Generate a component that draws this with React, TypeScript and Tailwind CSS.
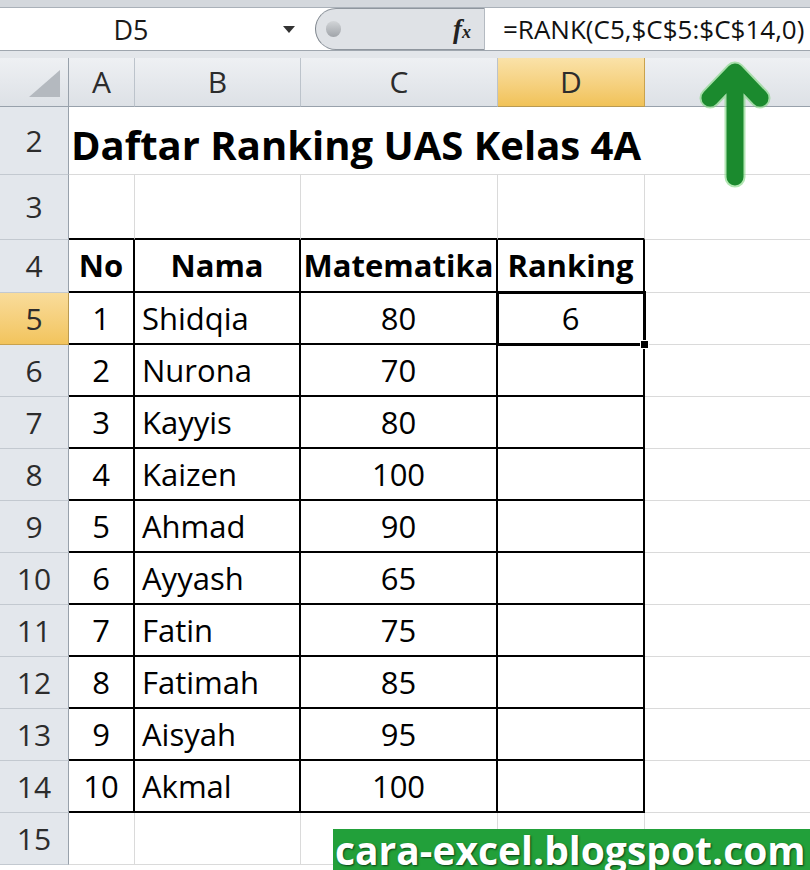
import React from 'react';

const students: [number, string, number][] = [
  [1, 'Shidqia', 80],
  [2, 'Nurona', 70],
  [3, 'Kayyis', 80],
  [4, 'Kaizen', 100],
  [5, 'Ahmad', 90],
  [6, 'Ayyash', 65],
  [7, 'Fatin', 75],
  [8, 'Fatimah', 85],
  [9, 'Aisyah', 95],
  [10, 'Akmal', 100],
];

function FormulaBar() {
  return (
    <div className="h-[58px] flex flex-col">
      <div className="h-[8px] bg-[#d4d8dd] border-b border-[#aab1b9]" />
      <div className="h-[42px] flex bg-white">
        {/* Name box */}
        <div className="w-[315px] flex items-center">
          <span className="w-[262px] text-center text-[27px] leading-none text-[#1a1a1a]">D5</span>
          <svg width="14" height="9" viewBox="0 0 14 9" className="ml-[20px]">
            <path d="M1 1 H13 L7 8 Z" fill="#333" />
          </svg>
        </div>
        {/* Expand pill + fx */}
        <div className="w-[169px] flex items-center bg-[#dfe2e6] rounded-l-[22px] border border-r-0 border-[#8f969e] border-l-[#7d848c]">
          <div className="ml-[10px] w-[15px] h-[16px] rounded-full bg-linear-to-b from-[#d2d5d8] to-[#a0a4a9]" />
          <span className="ml-auto mr-[13px] font-['Liberation_Serif',serif] italic font-bold text-[27px] leading-none text-[#222]">
            f<span className="text-[18px]">x</span>
          </span>
        </div>
        {/* Formula */}
        <div className="flex-1 flex items-center pl-[18px] border-l border-[#b4bac1] text-[26px] leading-none text-[#111]">
          =RANK(C5,$C$5:$C$14,0)
        </div>
      </div>
      <div className="h-[8px] bg-[#e3e6ea] border-t border-[#9fa6ae]" />
    </div>
  );
}

function RowHead({ n, active }: { n: number; active?: boolean }) {
  return (
    <div
      className={`flex items-center justify-center text-[30px] leading-none text-[#2c2c2c] border-r border-b ${
        active
          ? 'bg-linear-to-b from-[#f9dc9a] to-[#f2c45c] border-r-[#b99a52] border-b-[#c9a24d]'
          : 'bg-[#e3e7ec] border-r-[#98a1ab] border-b-[#c3c9d0]'
      }`}
    >
      {n}
    </div>
  );
}

function ColHead({ label, active }: { label: string; active?: boolean }) {
  return (
    <div
      className={`flex items-center justify-center text-[30px] leading-none text-[#2c2c2c] border-r border-b ${
        active
          ? 'bg-linear-to-b from-[#fae2a8] to-[#f1c257] border-r-[#c9a24d] border-b-[#b99a52]'
          : 'bg-linear-to-b from-[#eef0f3] to-[#dde1e6] border-r-[#bcc3cb] border-b-[#98a1ab]'
      }`}
    >
      {label}
    </div>
  );
}

export default function App() {
  return (
    <div className="relative w-[810px] h-[870px] overflow-hidden bg-white font-['Open_Sans',sans-serif] text-black">
      <FormulaBar />

      <div className="grid grid-cols-[69px_66px_166px_197px_147px_1fr] grid-rows-[49px_68px_65px_53px_repeat(11,52px)]">
        {/* Column headers */}
        <div className="relative bg-linear-to-b from-[#eef0f3] to-[#dde1e6] border-r border-b border-r-[#98a1ab] border-b-[#98a1ab]">
          <svg className="absolute right-[8px] bottom-[9px]" width="31" height="27" viewBox="0 0 31 27">
            <path d="M31 0 V27 H0 Z" fill="#b4b9bf" />
          </svg>
        </div>
        <ColHead label="A" />
        <ColHead label="B" />
        <ColHead label="C" />
        <ColHead label="D" active />
        <div className="bg-linear-to-b from-[#eef0f3] to-[#dde1e6] border-b border-[#98a1ab]" />

        {/* Row 2 - title */}
        <RowHead n={2} />
        <div className="relative z-10 flex items-center pt-[8px] pl-[2px] border-b border-[#dadada]">
          <span className="whitespace-nowrap font-bold text-[40px] leading-none">Daftar Ranking UAS Kelas 4A</span>
        </div>
        <div className="border-b border-[#dadada]" />
        <div className="border-b border-[#dadada]" />
        <div className="border-b border-[#dadada]" />
        <div className="border-b border-[#dadada]" />

        {/* Row 3 - empty, table top border */}
        <RowHead n={3} />
        <div className="border-r border-r-[#dadada] border-b-2 border-b-black" />
        <div className="border-r border-r-[#dadada] border-b-2 border-b-black" />
        <div className="border-r border-r-[#dadada] border-b-2 border-b-black" />
        <div className="border-r border-r-[#dadada] border-b-2 border-b-black" />
        <div className="border-b border-[#dadada]" />

        {/* Row 4 - table header */}
        <RowHead n={4} />
        <div className="flex items-center justify-center border-r-2 border-b-2 border-black font-bold text-[31px] leading-none">No</div>
        <div className="flex items-center justify-center border-r-2 border-b-2 border-black font-bold text-[31px] leading-none">Nama</div>
        <div className="flex items-center justify-center border-r-2 border-b-2 border-black font-bold text-[31px] leading-none whitespace-nowrap">Matematika</div>
        <div className="flex items-center justify-center border-r-2 border-b-2 border-black font-bold text-[31px] leading-none">Ranking</div>
        <div className="border-b border-[#dadada]" />

        {/* Rows 5-14 - data */}
        {students.map(([no, nama, nilai], i) => (
          <React.Fragment key={no}>
            <RowHead n={i + 5} active={i === 0} />
            <div className="flex items-center justify-center border-r-2 border-b-2 border-black text-[31px] leading-none">{no}</div>
            <div className="flex items-center pl-[7px] border-r-2 border-b-2 border-black text-[31px] leading-none">{nama}</div>
            <div className="flex items-center justify-center border-r-2 border-b-2 border-black text-[31px] leading-none">{nilai}</div>
            <div className="relative flex items-center justify-center border-r-2 border-b-2 border-black text-[31px] leading-none">
              {i === 0 && (
                <>
                  6
                  <div className="absolute z-10 -top-[2px] -left-[2px] -right-[3px] -bottom-[3px] border-[3px] border-black" />
                  <div className="absolute z-20 -right-[6px] -bottom-[6px] w-[9px] h-[9px] bg-black border border-white" />
                </>
              )}
            </div>
            <div className="border-b border-[#dadada]" />
          </React.Fragment>
        ))}

        {/* Row 15 */}
        <RowHead n={15} />
        <div className="border-r border-b border-[#dadada]" />
        <div className="border-r border-b border-[#dadada]" />
        <div className="border-r border-b border-[#dadada]" />
        <div className="border-r border-b border-[#dadada]" />
        <div className="border-b border-[#dadada]" />
      </div>

      {/* Green arrow pointing at the formula */}
      <svg className="absolute left-[690px] top-[55px]" width="90" height="140" viewBox="690 55 90 140">
        <path d="M735 177 V75 M710 98 L735 72 L760 98" fill="none" stroke="#7ed67e" strokeWidth="21" strokeLinecap="round" strokeLinejoin="round" opacity="0.6" />
        <path d="M735 177 V75 M710 98 L735 72 L760 98" fill="none" stroke="#1b8a2e" strokeWidth="17" strokeLinecap="round" strokeLinejoin="round" />
      </svg>

      {/* Watermark */}
      <div className="absolute left-[333px] top-[829px] w-[477px] h-[41px] bg-[#22a03a] flex items-center overflow-hidden">
        <span className="pl-[2px] whitespace-nowrap font-bold text-[39px] leading-none text-white [text-shadow:1px_1px_2px_#0b3d14]">
          cara-excel.blogspot.com
        </span>
      </div>
    </div>
  );
}
